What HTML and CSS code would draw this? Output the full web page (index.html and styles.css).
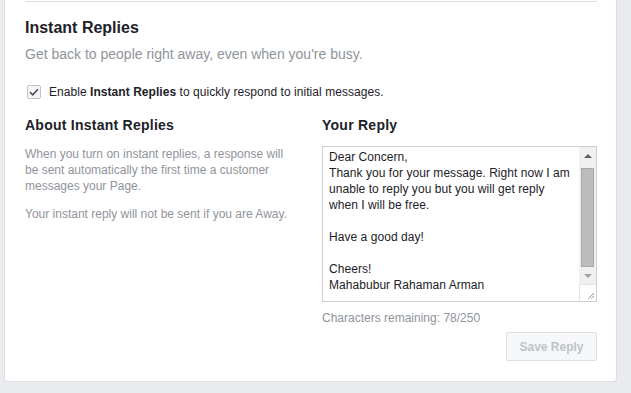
FILE: index.html
```html
<!DOCTYPE html>
<html lang="en">
<head>
  <meta charset="UTF-8" />
  <meta name="viewport" content="width=device-width, initial-scale=1.0"/>
  <title>Instant Replies</title>
  <link rel="stylesheet" href="styles.css">
</head>
<body>
  <div class="page">
    <div class="card">
      <hr class="divider">
      <h2 class="title">Instant Replies</h2>
      <p class="subtitle">Get back to people right away, even when you're busy.</p>

      <label class="check-row">
        <span class="checkbox">
          <svg width="10" height="8" viewBox="0 0 10 8"><path d="M1 4.2 L3.8 6.8 L9 1.2" fill="none" stroke="#4b4f56" stroke-width="1.6"/></svg>
        </span>
        <span>Enable <b>Instant Replies</b> to quickly respond to initial messages.</span>
      </label>

      <div class="columns">
        <div class="col">
          <h3>About Instant Replies</h3>
          <p class="note">When you turn on instant replies, a response will be sent automatically the first time a customer messages your Page.</p>
          <p class="note">Your instant reply will not be sent if you are Away.</p>
        </div>
        <div class="col">
          <h3>Your Reply</h3>
          <div class="reply-box">
            <textarea class="reply-text">Dear Concern,
Thank you for your message. Right now I am unable to reply you but you will get reply when I will be free.

Have a good day!

Cheers!
Mahabubur Rahaman Arman</textarea>
            <div class="scrollbar">
              <div class="sb-btn"><span class="arrow-up"></span></div>
              <div class="sb-track"><div class="sb-thumb"></div></div>
              <div class="sb-btn"><span class="arrow-down"></span></div>
              <div class="sb-grip">
                <svg width="17" height="17" viewBox="0 0 17 17"><path d="M15 9 L9 15 M15 12 L12 15" stroke="#8a8a8a" stroke-width="1"/></svg>
              </div>
            </div>
          </div>
          <p class="counter">Characters remaining: 78/250</p>
          <div class="actions">
            <button type="button" disabled>Save Reply</button>
          </div>
        </div>
      </div>
    </div>
  </div>
</body>
</html>
```

FILE: styles.css
```css
body {
  margin: 0;
  background: #e9ebee;
  font-family: 'Liberation Sans', Arial, Helvetica, sans-serif;
  color: #1d2129;
}

.page {
  padding: 0 14px 11px 4px;
}

.card {
  background: #fff;
  border: 1px solid #dddfe2;
  border-top: none;
  border-radius: 0 0 3px 3px;
  padding: 1px 19px 20px 20px;
}

.divider {
  margin: 0;
  border: none;
  border-top: 1px solid #dadde1;
}

.title {
  margin: 16px 0 0;
  font-size: 16px;
  line-height: 20px;
  font-weight: bold;
}

.subtitle {
  margin: 7px 0 0;
  font-size: 14px;
  line-height: 18px;
  color: #90949c;
}

.check-row {
  margin-top: 21px;
  display: flex;
  align-items: center;
  font-size: 12px;
  line-height: 16px;
  letter-spacing: 0.05px;
  padding-left: 2px;
}

.checkbox {
  width: 12px;
  height: 12px;
  border: 1px solid #bec3c9;
  border-radius: 2px;
  background: #f5f6f7;
  display: flex;
  align-items: center;
  justify-content: center;
  margin-right: 8px;
}

.columns {
  margin-top: 16px;
  display: grid;
  grid-template-columns: 270px 275px;
  column-gap: 27px;
}

.col h3 {
  margin: 0 0 12px;
  font-size: 14px;
  line-height: 18px;
  font-weight: bold;
  letter-spacing: 0.25px;
}

.note {
  margin: 0 0 12px;
  font-size: 12px;
  line-height: 16px;
  color: #90949c;
}

.reply-box {
  display: flex;
  height: 154px;
  border: 1px solid #ccd0d5;
}

.reply-text {
  flex: 1;
  border: none;
  outline: none;
  resize: none;
  overflow: hidden;
  padding: 2px 6px;
  margin: 0;
  font-family: 'Liberation Sans', Arial, sans-serif;
  font-size: 12px;
  line-height: 16px;
  letter-spacing: 0.05px;
  color: #1d2129;
}

.scrollbar {
  width: 17px;
  display: flex;
  flex-direction: column;
  background: #f0f0f0;
}

.sb-btn {
  height: 17px;
  display: flex;
  align-items: center;
  justify-content: center;
}

.arrow-up,
.arrow-down {
  width: 0;
  height: 0;
  border-left: 4px solid transparent;
  border-right: 4px solid transparent;
}

.arrow-up {
  border-bottom: 4px solid #606060;
}

.arrow-down {
  border-top: 4px solid #a3a3a3;
}

.sb-track {
  flex: 1;
  padding: 4px 2px 0;
}

.sb-thumb {
  height: 97px;
  background: #bcbcbc;
  border: 1px solid #a8a8a8;
}

.sb-grip {
  height: 17px;
  background: #fff;
  border-top: 1px solid #e3e3e3;
  border-left: 1px solid #e3e3e3;
  box-sizing: border-box;
  display: flex;
  align-items: flex-end;
  justify-content: flex-end;
}

.sb-grip svg {
  display: block;
}

.counter {
  margin: 8px 0 0;
  font-size: 12px;
  line-height: 16px;
  color: #90949c;
}

.actions {
  display: flex;
  justify-content: flex-end;
  margin-top: 6px;
}

button {
  width: 91px;
  height: 29px;
  background: #f6f7f9;
  border: 1px solid #dddfe2;
  border-radius: 2px;
  color: #bec3c9;
  font-family: 'Liberation Sans', Arial, sans-serif;
  font-size: 12px;
  font-weight: bold;
  padding: 0;
}
```
